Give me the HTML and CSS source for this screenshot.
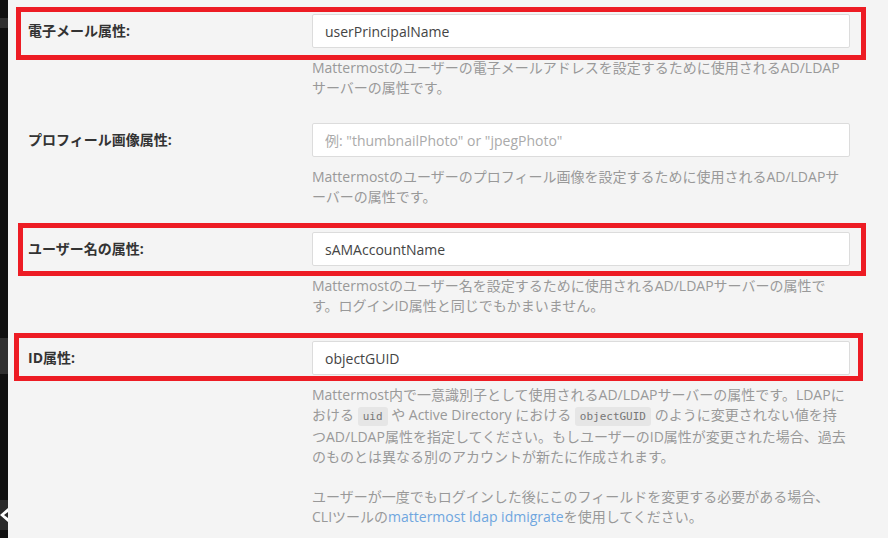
FILE: index.html
```html
<!DOCTYPE html>
<html lang="ja">
<head>
  <meta charset="UTF-8" />
  <meta name="viewport" content="width=device-width, initial-scale=1" />
  <title>AD/LDAP - System Console</title>
  <link rel="stylesheet" href="styles.css">
</head>
<body>

<div class="page">
  <aside class="sidebar">
    <div class="sidebar-item item-top"></div>
    <div class="sidebar-item item-mid"></div>
    <div class="sidebar-item item-toggle">
      <svg width="8" height="30" viewBox="0 0 8 30">
        <path d="M8 8 L8 12 L4 15 L8 18 L8 22 L0 15 Z" fill="#fff" />
      </svg>
    </div>
  </aside>

  <main class="content">
    <div class="form-group mark mark-email">
      <label class="control-label" for="emailAttr">電子メール属性:</label>
      <div class="field">
        <input type="text" id="emailAttr" class="form-control" value="userPrincipalName" />
        <div class="help-text">Mattermostのユーザーの電子メールアドレスを設定するために使用されるAD/LDAPサーバーの属性です。</div>
      </div>
    </div>

    <div class="form-group">
      <label class="control-label" for="pictureAttr">プロフィール画像属性:</label>
      <div class="field">
        <input type="text" id="pictureAttr" class="form-control" placeholder='例: "thumbnailPhoto" or "jpegPhoto"' />
        <div class="help-text">Mattermostのユーザーのプロフィール画像を設定するために使用されるAD/LDAPサーバーの属性です。</div>
      </div>
    </div>

    <div class="form-group mark mark-username">
      <label class="control-label" for="usernameAttr">ユーザー名の属性:</label>
      <div class="field">
        <input type="text" id="usernameAttr" class="form-control" value="sAMAccountName" />
        <div class="help-text">Mattermostのユーザー名を設定するために使用されるAD/LDAPサーバーの属性です。ログインID属性と同じでもかまいません。</div>
      </div>
    </div>

    <div class="form-group mark mark-id">
      <label class="control-label" for="idAttr">ID属性:</label>
      <div class="field">
        <input type="text" id="idAttr" class="form-control" value="objectGUID" />
        <div class="help-text">
          Mattermost内で一意識別子として使用されるAD/LDAPサーバーの属性です。LDAPにおける <code>uid</code> や Active Directory における <code>objectGUID</code> のように変更されない値を持つAD/LDAP属性を指定してください。もしユーザーのID属性が変更された場合、過去のものとは異なる別のアカウントが新たに作成されます。<br><br>
          ユーザーが一度でもログインした後にこのフィールドを変更する必要がある場合、CLIツールの<a href="#">mattermost ldap idmigrate</a>を使用してください。
        </div>
      </div>
    </div>
  </main>
</div>

</body>
</html>
```

FILE: styles.css
```css
body {
  margin: 0;
  padding: 0;
  background-color: #f4f4f4;
  font-family: "Open Sans", "Noto Sans CJK JP", sans-serif;
  font-size: 14px;
  color: #333;
}

.page {
  display: flex;
  min-height: 538px;
}

/* 左のサイドバー（ほとんど隠れている） */
.sidebar {
  width: 8px;
  flex-shrink: 0;
  background-color: #101010;
  display: flex;
  flex-direction: column;
}

.sidebar-item {
  background-color: #303030;
}

.item-top {
  margin-top: 18px;
  height: 10px;
}

.item-mid {
  margin-top: 310px;
  height: 36px;
}

.item-toggle {
  margin-top: 126px;
  height: 30px;
  background-color: #2a2a2a;
}

.item-toggle svg {
  display: block;
}

.content {
  flex: 1;
  padding: 14px 0 0 20px;
}

.form-group {
  display: flex;
  position: relative;
  width: 822px;
  margin-bottom: 25px;
}

.control-label {
  width: 284px;
  flex-shrink: 0;
  padding-top: 7px;
  line-height: 20px;
  font-weight: 700;
  color: #333;
}

.field {
  width: 538px;
}

.form-control {
  display: block;
  box-sizing: border-box;
  width: 100%;
  height: 34px;
  padding: 6px 12px;
  border: 1px solid #dcdcdc;
  border-radius: 2px;
  background: #fff;
  font-family: inherit;
  font-size: 14px;
  color: #444;
}

.form-control::placeholder {
  color: #aaa;
}

.help-text {
  max-width: 535px;
  margin-top: 10px;
  line-height: 20px;
  color: #999;
}

.help-text code {
  font-family: "DejaVu Sans Mono", monospace;
  font-size: 11px;
  color: #777;
  background-color: #e6e6e6;
  padding: 3px 5px;
  border-radius: 3px;
}

.help-text a {
  color: #6fa6df;
  text-decoration: none;
}

/* 赤い注釈枠 */
.mark::after {
  content: "";
  position: absolute;
  border: 5px solid #ed1c24;
  box-sizing: border-box;
  pointer-events: none;
}

.mark-email::after {
  top: -7px;
  left: -12px;
  right: -16px;
  height: 53px;
}

.mark-username::after {
  top: -9px;
  left: -10px;
  right: -16px;
  height: 53px;
}

.mark-id::after {
  top: -8px;
  left: -14px;
  right: -13px;
  height: 48px;
}
```
